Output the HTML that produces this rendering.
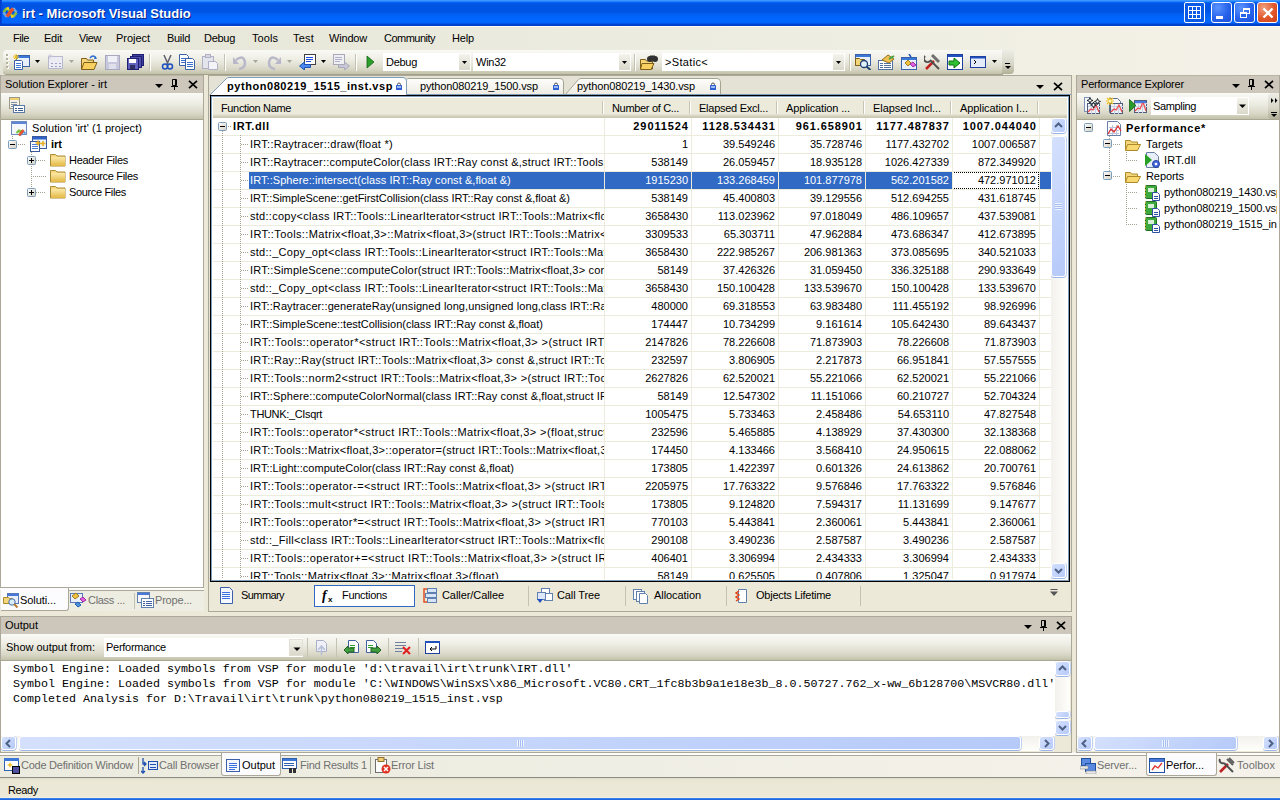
<!DOCTYPE html><html><head><meta charset="utf-8"><style>
*{box-sizing:border-box}
body{font-variant-ligatures:none;margin:0;width:1280px;height:800px;position:relative;overflow:hidden;background:#ECE9D8;font:11px 'Liberation Sans',sans-serif;color:#000}
div{position:absolute}
.t{white-space:nowrap;line-height:13px;height:13px}
.hdr{background:#CCC7BA}
.tb{background:linear-gradient(180deg,#FAFAF6 0%,#EEEDE4 40%,#D8D7C6 80%,#C2C1A9 100%)}
.g{color:#6D6D6D}
</style></head><body>
<div style="left:0px;top:0px;width:1280px;height:26px;background:linear-gradient(180deg,#3D95FF 0px,#3D95FF 1px,#0A6CFF 2px,#0058E8 3px,#0054E3 5px,#0054E3 12px,#0060F0 14px,#0066FF 18px,#0066FF 23px,#0044D0 24px,#0040C8 26px)"></div>
<div class="t" style="left:22px;top:6px;font:bold 13px 'Liberation Sans',sans-serif;color:#fff;height:15px;line-height:15px;text-shadow:1px 1px 0 #0A1E8A">irt - Microsoft Visual Studio</div>
<div style="left:0px;top:0px;width:2px;height:26px;background:linear-gradient(90deg,#0034C8,#0050E0)"></div>
<svg style="position:absolute;left:0px;top:4px" width="20" height="16" viewBox="0 0 20 16"><path d="M3.5 8.5 L6 5 L8 5 L9.5 7" stroke="#7CC040" stroke-width="2.6" fill="none"/><path d="M3.5 8.5 L6 12 L8 12" stroke="#6FA8E0" stroke-width="2.6" fill="none"/><path d="M6.5 4.5 L9 4.5" stroke="#F8D020" stroke-width="2.6"/><path d="M16.5 8.5 L14 5 L12 5" stroke="#6FA8E0" stroke-width="2.6" fill="none"/><path d="M16.5 8.5 L14 12 L12 12 L10.5 10" stroke="#8CC040" stroke-width="2.6" fill="none"/><path d="M11 12.5 L13.5 12.5" stroke="#F8D020" stroke-width="2.6"/><path d="M7 12.5 L13 4.5" stroke="#E8502A" stroke-width="3.6"/></svg>
<div style="left:1184px;top:2px;width:21px;height:21px;border:1px solid #fff;border-radius:2px;background:#0A5AE6"><svg style="position:absolute;left:3px;top:3px" width="13" height="13" viewBox="0 0 13 13"><rect x="0.5" y="0.5" width="12" height="12" fill="none" stroke="#fff"/><path d="M4.5 0v13M8.5 0v13M0 4.5h13M0 8.5h13" stroke="#fff"/></svg></div>
<div style="left:1211px;top:2px;width:21px;height:21px;border:1px solid #fff;border-radius:3px;background:radial-gradient(circle at 30% 25%,#5A94FF,#2663EB 55%,#1B4FD8)"><div style="left:4px;top:13px;width:7px;height:3px;background:#fff"></div></div>
<div style="left:1234px;top:2px;width:21px;height:21px;border:1px solid #fff;border-radius:3px;background:radial-gradient(circle at 30% 25%,#5A94FF,#2663EB 55%,#1B4FD8)"><svg style="position:absolute;left:4px;top:4px" width="12" height="12" viewBox="0 0 12 12"><rect x="4.5" y="1.5" width="6" height="5" fill="none" stroke="#fff"/><rect x="4" y="1" width="7" height="2" fill="#fff"/><rect x="1.5" y="5.5" width="6" height="5" fill="#2663EB" stroke="#fff"/><rect x="1" y="5" width="7" height="2" fill="#fff"/></svg></div>
<div style="left:1257px;top:2px;width:21px;height:21px;border:1px solid #fff;border-radius:3px;background:radial-gradient(circle at 30% 25%,#F0A080,#E2562A 55%,#C8401A)"><svg style="position:absolute;left:4px;top:4px" width="12" height="12" viewBox="0 0 12 12"><path d="M1.5 1.5L10.5 10.5M10.5 1.5L1.5 10.5" stroke="#fff" stroke-width="2.4"/></svg></div>
<div style="left:0px;top:26px;width:1280px;height:49px;background:linear-gradient(90deg,#E5E5D7,#F4F2E8)"></div>
<div style="left:0px;top:26px;width:1280px;height:1px;background:#FFFBEF"></div>
<div class="t" style="left:13px;top:32px;letter-spacing:-0.430px;">File</div>
<div class="t" style="left:44px;top:32px;letter-spacing:-0.242px;">Edit</div>
<div class="t" style="left:79px;top:32px;letter-spacing:-0.410px;">View</div>
<div class="t" style="left:116px;top:32px;letter-spacing:-0.036px;">Project</div>
<div class="t" style="left:167px;top:32px;letter-spacing:-0.294px;">Build</div>
<div class="t" style="left:204px;top:32px;letter-spacing:-0.287px;">Debug</div>
<div class="t" style="left:252px;top:32px;letter-spacing:0.062px;">Tools</div>
<div class="t" style="left:293px;top:32px;letter-spacing:0.203px;">Test</div>
<div class="t" style="left:329px;top:32px;letter-spacing:-0.188px;">Window</div>
<div class="t" style="left:384px;top:32px;letter-spacing:-0.514px;">Community</div>
<div class="t" style="left:452px;top:32px;letter-spacing:-0.156px;">Help</div>
<div style="left:3px;top:50px;width:1000px;height:24px;border-radius:4px 0 0 4px;box-shadow:0 1px 0 #A3A288"></div>
<div class="tb" style="left:3px;top:50px;width:1000px;height:24px;border-radius:4px 0 0 4px"></div>
<div style="left:1002px;top:50px;width:12px;height:24px;border-radius:0 4px 4px 0;background:linear-gradient(180deg,#EEEDE6,#D6D5C6 60%,#B0AF96)"><svg style="position:absolute;left:3px;top:13px" width="6" height="8" viewBox="0 0 6 8"><path d="M0 0.5h5" stroke="#000"/><path d="M0 3h6L3 6z" fill="#000"/></svg></div>
<div style="left:6px;top:54px;width:2px;height:2px;background:#B5B29E;box-shadow:1px 1px 0 #fff"></div>
<div style="left:6px;top:58px;width:2px;height:2px;background:#B5B29E;box-shadow:1px 1px 0 #fff"></div>
<div style="left:6px;top:62px;width:2px;height:2px;background:#B5B29E;box-shadow:1px 1px 0 #fff"></div>
<div style="left:6px;top:66px;width:2px;height:2px;background:#B5B29E;box-shadow:1px 1px 0 #fff"></div>
<svg style="position:absolute;left:13px;top:54px" width="17" height="16" viewBox="0 0 17 16"><rect x="3.5" y="1.5" width="13" height="11" fill="#E8F0FC" stroke="#3A60A8"/><rect x="4" y="2" width="12" height="2" fill="#3C78D8"/><path d="M3 0v6M0 3h6M1 1l4 4M5 1L1 5" stroke="#F0C020"/><path d="M1.5 6.5h7l1 1v8h-8z" fill="#fff" stroke="#3A60A8"/><path d="M3 9.5h5M3 11.5h5M3 13.5h5" stroke="#3C78D8"/></svg>
<svg style="position:absolute;left:35px;top:60px" width="5" height="3" viewBox="0 0 5 3"><path d="M0 0h5L2.5 3z" fill="#000"/></svg>
<svg style="position:absolute;left:47px;top:54px" width="17" height="16" viewBox="0 0 17 16"><rect x="1.5" y="2.5" width="14" height="12" fill="#ECECF4" stroke="#B8B8D0"/><path d="M4 9.5h2M8 9.5h2M12 9.5h2M4 12.5h2M8 12.5h2M12 12.5h2" stroke="#A0A0C0"/><path d="M3 0v5M1 2h5" stroke="#C8C8D8"/></svg>
<svg style="position:absolute;left:69px;top:60px" width="5" height="3" viewBox="0 0 5 3"><path d="M0 0h5L2.5 3z" fill="#A8A898"/></svg>
<svg style="position:absolute;left:81px;top:54px" width="17" height="16" viewBox="0 0 17 16"><path d="M0.5 4.5h5l1 1.5h6v9h-12z" fill="#F3D67A" stroke="#806018"/><path d="M3 8.5h13l-3 7h-12.5z" fill="#F8D060" stroke="#806018"/><path d="M9 4q3-4 6 0" stroke="#2F6FD0" fill="none" stroke-width="1.5"/><path d="M14 2l2 3-3 0z" fill="#2F6FD0"/></svg>
<svg style="position:absolute;left:104px;top:54px" width="17" height="16" viewBox="0 0 17 16"><rect x="1.5" y="1.5" width="14" height="14" fill="#C8C8DC" stroke="#A8A8C0"/><rect x="4" y="2" width="9" height="6" fill="#F0F0F8"/><rect x="5" y="10" width="7" height="5" fill="#E0E0EC"/></svg>
<svg style="position:absolute;left:127px;top:54px" width="17" height="16" viewBox="0 0 17 16"><rect x="5.5" y="0.5" width="11" height="11" fill="#4040A0" stroke="#202070"/><rect x="3.5" y="2.5" width="11" height="11" fill="#5050B0" stroke="#202070"/><rect x="0.5" y="4.5" width="11" height="11" fill="#6060C0" stroke="#202070"/><rect x="2" y="5" width="7" height="4" fill="#fff"/><rect x="3" y="11" width="5" height="4" fill="#303060"/></svg>
<div style="left:149px;top:54px;width:1px;height:17px;background:#C5C2B2;box-shadow:1px 0 0 #fff"></div>
<svg style="position:absolute;left:159px;top:54px" width="17" height="16" viewBox="0 0 17 16"><path d="M5 1L9 10M12 1L8 10" stroke="#606070" stroke-width="1.5"/><circle cx="6" cy="12.5" r="2.5" fill="none" stroke="#2050C0" stroke-width="1.5"/><circle cx="11" cy="12.5" r="2.5" fill="none" stroke="#2050C0" stroke-width="1.5"/></svg>
<svg style="position:absolute;left:179px;top:54px" width="17" height="16" viewBox="0 0 17 16"><path d="M0.5 0.5h7l2 2v9h-9z" fill="#fff" stroke="#3A60A8"/><path d="M2 4.5h5M2 6.5h5M2 8.5h5" stroke="#3A70D0"/><path d="M6.5 4.5h7l2 2v9h-9z" fill="#fff" stroke="#3A60A8"/><path d="M8 8.5h6M8 10.5h6M8 12.5h6" stroke="#3A70D0"/></svg>
<svg style="position:absolute;left:202px;top:54px" width="17" height="16" viewBox="0 0 17 16"><rect x="0.5" y="2.5" width="11" height="12" fill="#E4E4EC" stroke="#B0B0C4"/><rect x="3.5" y="0.5" width="5" height="3" fill="#D8D8E0" stroke="#B0B0C4"/><path d="M6.5 7.5h7l2 2v6h-9z" fill="#F4F4F8" stroke="#B0B0C4"/></svg>
<div style="left:224px;top:54px;width:1px;height:17px;background:#C5C2B2;box-shadow:1px 0 0 #fff"></div>
<svg style="position:absolute;left:232px;top:54px" width="17" height="16" viewBox="0 0 17 16"><path d="M4 6q8-6 9 3q0 5-6 6" stroke="#B8B8C8" fill="none" stroke-width="2.5"/><path d="M1 3v7h6z" fill="#B8B8C8"/></svg>
<svg style="position:absolute;left:253px;top:60px" width="5" height="3" viewBox="0 0 5 3"><path d="M0 0h5L2.5 3z" fill="#A8A898"/></svg>
<svg style="position:absolute;left:265px;top:54px" width="17" height="16" viewBox="0 0 17 16"><path d="M13 6q-8-6-9 3q0 5 6 6" stroke="#B8B8C8" fill="none" stroke-width="2.5"/><path d="M16 3v7h-6z" fill="#B8B8C8"/></svg>
<svg style="position:absolute;left:287px;top:60px" width="5" height="3" viewBox="0 0 5 3"><path d="M0 0h5L2.5 3z" fill="#A8A898"/></svg>
<svg style="position:absolute;left:299px;top:54px" width="17" height="16" viewBox="0 0 17 16"><rect x="5.5" y="0.5" width="11" height="10" fill="#fff" stroke="#404040"/><path d="M7 3.5h7M7 5.5h7M7 7.5h5" stroke="#2050E0"/><path d="M0.5 12l5-4v2.5h6v3h-6V16z" fill="#4A8AF0" stroke="#2050B0"/></svg>
<svg style="position:absolute;left:321px;top:60px" width="5" height="3" viewBox="0 0 5 3"><path d="M0 0h5L2.5 3z" fill="#000"/></svg>
<svg style="position:absolute;left:333px;top:54px" width="17" height="16" viewBox="0 0 17 16"><rect x="0.5" y="0.5" width="11" height="10" fill="#F0F0F4" stroke="#A8A8B8"/><path d="M2 3.5h7M2 5.5h7M2 7.5h5" stroke="#B0B0C8"/><path d="M16.5 12l-5-4v2.5h-6v3h6V16z" fill="#C8C8D8" stroke="#A8A8B8"/></svg>
<div style="left:355px;top:54px;width:1px;height:17px;background:#C5C2B2;box-shadow:1px 0 0 #fff"></div>
<svg style="position:absolute;left:366px;top:55px" width="9" height="14" viewBox="0 0 9 14"><path d="M1 1v12l7-6z" fill="#2AA02A" stroke="#186018" stroke-width="0.8"/></svg>
<div style="left:383px;top:53px;width:88px;height:18px;background:#fff"></div><div class="t" style="left:386px;top:56px;letter-spacing:-0.287px;">Debug</div><div style="left:459px;top:54px;width:11px;height:16px;background:linear-gradient(180deg,#F4F3EC,#DAD8CA)"><svg style="position:absolute;left:3px;top:7px" width="5" height="3" viewBox="0 0 5 3"><path d="M0 0h5L2.5 3z" fill="#000"/></svg></div>
<div style="left:473px;top:53px;width:158px;height:18px;background:#fff"></div><div class="t" style="left:476px;top:56px;letter-spacing:-0.237px;">Win32</div><div style="left:619px;top:54px;width:11px;height:16px;background:linear-gradient(180deg,#F4F3EC,#DAD8CA)"><svg style="position:absolute;left:3px;top:7px" width="5" height="3" viewBox="0 0 5 3"><path d="M0 0h5L2.5 3z" fill="#000"/></svg></div>
<div style="left:634px;top:54px;width:1px;height:17px;background:#C5C2B2;box-shadow:1px 0 0 #fff"></div>
<svg style="position:absolute;left:640px;top:54px" width="18" height="16" viewBox="0 0 18 16"><path d="M0.5 5.5h5l1 1.5h6v8h-12z" fill="#F3D67A" stroke="#806018"/><path d="M2 9.5h12l-3 6h-10.5z" fill="#F8D060" stroke="#806018"/><circle cx="10" cy="5" r="3" fill="#303030"/><circle cx="15" cy="5" r="3" fill="#303030"/><path d="M10 2.5h5" stroke="#303030" stroke-width="2"/></svg>
<div style="left:662px;top:53px;width:183px;height:18px;background:#fff"></div><div class="t" style="left:665px;top:56px;letter-spacing:0.328px;">&gt;Static&lt;</div><div style="left:833px;top:54px;width:11px;height:16px;background:linear-gradient(180deg,#F4F3EC,#DAD8CA)"><svg style="position:absolute;left:3px;top:7px" width="5" height="3" viewBox="0 0 5 3"><path d="M0 0h5L2.5 3z" fill="#000"/></svg></div>
<div style="left:849px;top:54px;width:1px;height:17px;background:#C5C2B2;box-shadow:1px 0 0 #fff"></div>
<svg style="position:absolute;left:855px;top:54px" width="17" height="16" viewBox="0 0 17 16"><rect x="0.5" y="0.5" width="15" height="11" fill="#E8F0FC" stroke="#3A60A8"/><rect x="1" y="1" width="14" height="2" fill="#3C78D8"/><path d="M0.5 4.5h4l1 1h4v6h-9z" fill="#F3D67A" stroke="#806018"/><circle cx="9" cy="10" r="3.5" fill="#E0F0FC" stroke="#204070" stroke-width="1.3"/><path d="M11.5 12.5l4 3.5" stroke="#204070" stroke-width="2"/></svg>
<svg style="position:absolute;left:878px;top:54px" width="17" height="16" viewBox="0 0 17 16"><rect x="0.5" y="6.5" width="14" height="9" fill="#fff" stroke="#5070A0"/><path d="M2 9.5h3M6 9.5h7M2 11.5h3M6 11.5h7M2 13.5h3M6 13.5h7" stroke="#5070A0"/><path d="M4 6l6-5 6 4-5 4z" fill="#F0C050" stroke="#907020"/><path d="M11 5l5-3" stroke="#40A040" stroke-width="2"/></svg>
<svg style="position:absolute;left:901px;top:54px" width="17" height="16" viewBox="0 0 17 16"><rect x="0.5" y="3.5" width="15" height="12" fill="#E8F0FC" stroke="#3A60A8"/><rect x="1" y="4" width="14" height="2" fill="#3C78D8"/><path d="M4 9l3-3 3 3-3 3z" fill="#F0C040" stroke="#A08020"/><path d="M9 10l3-2 3 3-3 2z" fill="#E060E0" stroke="#A030A0"/><path d="M8 0l2 3" stroke="#2050B0" stroke-width="1.5"/></svg>
<svg style="position:absolute;left:924px;top:54px" width="17" height="16" viewBox="0 0 17 16"><path d="M2 15L10 7" stroke="#C02020" stroke-width="2.5"/><path d="M8 1l7 7" stroke="#707070" stroke-width="3"/><path d="M15 15L6 6" stroke="#505050" stroke-width="2"/><path d="M1 2a3.5 3.5 0 0 0 5 5" stroke="#505050" fill="none" stroke-width="2"/></svg>
<svg style="position:absolute;left:947px;top:54px" width="17" height="16" viewBox="0 0 17 16"><rect x="0.5" y="0.5" width="15" height="15" fill="#fff" stroke="#2040A0"/><rect x="1" y="1" width="14" height="2" fill="#2050C0"/><path d="M2 7h5v-3l6 5-6 5v-3h-5z" fill="#30C030" stroke="#107010"/></svg>
<svg style="position:absolute;left:970px;top:54px" width="17" height="16" viewBox="0 0 17 16"><rect x="0.5" y="2.5" width="15" height="11" fill="#E4ECFA" stroke="#2040A0"/><rect x="1" y="3" width="14" height="1.5" fill="#2050C0"/><path d="M4 6l2 2-2 2" stroke="#000" fill="none"/></svg>
<svg style="position:absolute;left:992px;top:60px" width="5" height="3" viewBox="0 0 5 3"><path d="M0 0h5L2.5 3z" fill="#000"/></svg>
<div style="left:0px;top:75px;width:1280px;height:702px;background:#ECE9D8"></div>
<svg width="0" height="0" style="position:absolute"><defs><linearGradient id="pmg" x1="0" y1="0" x2="1" y2="1"><stop offset="0" stop-color="#fff"/><stop offset="1" stop-color="#D2CEC0"/></linearGradient><linearGradient id="fold" x1="0" y1="0" x2="0" y2="1"><stop offset="0" stop-color="#FBE8A8"/><stop offset="1" stop-color="#E5B842"/></linearGradient></defs></svg>
<div style="left:0px;top:75px;width:204px;height:537px;background:#ECE9D8"></div>
<div style="left:0px;top:75px;width:204px;height:513px;background:#ECE9D8;border-right:1px solid #ACA899;border-left:1px solid #ACA899"></div>
<div style="left:1px;top:75px;width:202px;height:1px;background:#B8B5A5"></div>
<div style="left:1px;top:76px;width:202px;height:17px;background:#CCC7BA"></div>
<div class="t" style="left:5px;top:78px;letter-spacing:-0.033px;">Solution Explorer - irt</div>
<svg style="position:absolute;left:155px;top:84px" width="9" height="5" viewBox="0 0 9 5"><path d="M0 0h8L4 4z" fill="#000"/></svg><svg style="position:absolute;left:171px;top:79px" width="8" height="11" viewBox="0 0 8 11"><path d="M1.5 0.5h4v6h-4z" fill="none" stroke="#000"/><path d="M4.5 1v5" stroke="#000"/><path d="M0 7.5h7" stroke="#000"/><path d="M3.5 8v3" stroke="#000"/></svg><svg style="position:absolute;left:188px;top:80px" width="10" height="9" viewBox="0 0 10 9"><path d="M1 0.8L9 8.2M9 0.8L1 8.2" stroke="#000" stroke-width="1.7"/></svg>
<div class="tb" style="left:1px;top:93px;width:202px;height:26px;"></div>
<div style="left:1px;top:119px;width:202px;height:1px;background:#A9A693"></div>
<div style="left:1px;top:120px;width:202px;height:467px;background:#fff"></div>
<div style="left:12px;top:136px;width:1px;height:8px;background:repeating-linear-gradient(180deg,#A5A294 0 1px,transparent 1px 2px)"></div>
<div style="left:18px;top:144px;width:8px;height:1px;background:repeating-linear-gradient(90deg,#A5A294 0 1px,transparent 1px 2px)"></div>
<div style="left:31px;top:152px;width:1px;height:40px;background:repeating-linear-gradient(180deg,#A5A294 0 1px,transparent 1px 2px)"></div>
<div style="left:36px;top:160px;width:10px;height:1px;background:repeating-linear-gradient(90deg,#A5A294 0 1px,transparent 1px 2px)"></div>
<div style="left:31px;top:176px;width:15px;height:1px;background:repeating-linear-gradient(90deg,#A5A294 0 1px,transparent 1px 2px)"></div>
<div style="left:36px;top:192px;width:10px;height:1px;background:repeating-linear-gradient(90deg,#A5A294 0 1px,transparent 1px 2px)"></div>
<svg style="position:absolute;left:8px;top:140px" width="9" height="9" viewBox="0 0 9 9"><rect x="0.5" y="0.5" width="8" height="8" rx="1" fill="url(#pmg)" stroke="#7B9EBD"/><path d="M2 4.5h5" stroke="#000"/></svg>
<svg style="position:absolute;left:27px;top:156px" width="9" height="9" viewBox="0 0 9 9"><rect x="0.5" y="0.5" width="8" height="8" rx="1" fill="url(#pmg)" stroke="#7B9EBD"/><path d="M2 4.5h5" stroke="#000"/><path d="M4.5 2v5" stroke="#000"/></svg>
<svg style="position:absolute;left:27px;top:188px" width="9" height="9" viewBox="0 0 9 9"><rect x="0.5" y="0.5" width="8" height="8" rx="1" fill="url(#pmg)" stroke="#7B9EBD"/><path d="M2 4.5h5" stroke="#000"/><path d="M4.5 2v5" stroke="#000"/></svg>
<svg style="position:absolute;left:11px;top:121px" width="17" height="16" viewBox="0 0 17 16"><rect x="0.5" y="0.5" width="15" height="13" fill="#F4F7FC" stroke="#6F8BB8"/><rect x="1" y="1" width="14" height="2" fill="#5B86D9"/><path d="M5.5 12 L8 9.5 L9.5 11 L12 9.5" stroke="#7CC040" stroke-width="2.2" fill="none"/><path d="M9 14.5 L12 10.5 L14.5 12.5" stroke="#5A9AE0" stroke-width="2.2" fill="none"/><path d="M8 14.5 L12.5 9" stroke="#E8502A" stroke-width="2.6"/></svg>
<div class="t" style="left:32px;top:122px;letter-spacing:0.047px;">Solution 'irt' (1 project)</div>
<svg style="position:absolute;left:30px;top:136px" width="17" height="16" viewBox="0 0 17 16"><rect x="2.5" y="0.5" width="14" height="12" fill="#EEF3FC" stroke="#3A5A9A"/><rect x="3" y="1" width="13" height="2.5" fill="#2F62C8"/><rect x="0.5" y="5.5" width="9" height="10" fill="#fff" stroke="#3A5A9A"/><path d="M2 8.5h6M2 10.5h6M2 12.5h6" stroke="#4C7ED8"/><path d="M8 4.5v5M5.5 7h5M13 5v5M10.5 7.5h5" stroke="#E8B020" stroke-width="1.6"/></svg>
<div class="t" style="left:51px;top:138px;font-weight:bold">irt</div>
<svg style="position:absolute;left:50px;top:152px" width="16" height="15" viewBox="0 0 16 15"><path d="M0.5 2.5h5l1.5 1.5h8v10h-14.5z" fill="#F5D97E" stroke="#A88A3A"/><rect x="1" y="5" width="14" height="9" fill="url(#fold)"/></svg>
<div class="t" style="left:69px;top:154px;letter-spacing:-0.281px;">Header Files</div>
<svg style="position:absolute;left:50px;top:168px" width="16" height="15" viewBox="0 0 16 15"><path d="M0.5 2.5h5l1.5 1.5h8v10h-14.5z" fill="#F5D97E" stroke="#A88A3A"/><rect x="1" y="5" width="14" height="9" fill="url(#fold)"/></svg>
<div class="t" style="left:69px;top:170px;letter-spacing:-0.312px;">Resource Files</div>
<svg style="position:absolute;left:50px;top:184px" width="16" height="15" viewBox="0 0 16 15"><path d="M0.5 2.5h5l1.5 1.5h8v10h-14.5z" fill="#F5D97E" stroke="#A88A3A"/><rect x="1" y="5" width="14" height="9" fill="url(#fold)"/></svg>
<div class="t" style="left:69px;top:186px;letter-spacing:-0.346px;">Source Files</div>
<svg style="position:absolute;left:8px;top:96px" width="18" height="18" viewBox="0 0 18 18"><rect x="1.5" y="1.5" width="10" height="11" fill="#F4F2E8" stroke="#9A9A8A"/><rect x="2" y="2" width="9" height="2" fill="#F0D070"/><path d="M3 6.5h6M3 8.5h6M3 10.5h6" stroke="#8090A0"/><rect x="5.5" y="9.5" width="11" height="7" fill="#fff" stroke="#5A78A8"/><path d="M7 12.5h2M10 12.5h5M7 14.5h2M10 14.5h5" stroke="#3A5A90"/></svg>
<div style="left:1px;top:587px;width:203px;height:1px;background:#ACA899"></div>
<div style="left:0px;top:588px;width:204px;height:23px;background:linear-gradient(90deg,#ECEBDF,#EFEEE4)"></div>
<div style="left:0px;top:588px;width:204px;height:2px;background:#FDFDFB"></div>
<div style="left:68px;top:590px;width:136px;height:1px;background:#ACA899"></div>
<div style="left:1px;top:588px;width:68px;height:23px;background:#FCFCFE;border-right:1px solid #ACA899;border-bottom:1px solid #ACA899;border-radius:0 0 3px 0"></div>
<svg style="position:absolute;left:3px;top:592px" width="17" height="16" viewBox="0 0 17 16"><rect x="4.5" y="1.5" width="11" height="10" fill="#E9EEF8" stroke="#5878B8"/><rect x="5" y="2" width="10" height="2" fill="#4A78D8"/><path d="M0.5 5.5h5l1 1h3v5h-9z" fill="#F3D67A" stroke="#B08A2A"/><circle cx="9" cy="10" r="3.2" fill="#D8ECFA" stroke="#4870A8"/><path d="M11 12l3.5 3.5" stroke="#B87A30" stroke-width="2"/></svg>
<div class="t" style="left:20px;top:594px;letter-spacing:-0.080px;">Soluti...</div>
<svg style="position:absolute;left:70px;top:592px" width="17" height="16" viewBox="0 0 17 16"><rect x="0.5" y="1.5" width="12" height="9" fill="#E9EEF8" stroke="#5878B8"/><path d="M2 4l4-3 3 3-4 3z" fill="#F0C040" stroke="#A08020"/><path d="M10 7l3-2 3 3-3 2z" fill="#E060E0" stroke="#A030A0"/><path d="M5 12l3-2 3 3-3 2z" fill="#5090E0" stroke="#2060B0"/></svg>
<div class="t" style="left:88px;top:594px;letter-spacing:-0.306px;color:#707070">Class ...</div>
<div style="left:134px;top:593px;width:1px;height:16px;background:#C5C2B2"></div>
<svg style="position:absolute;left:137px;top:592px" width="17" height="16" viewBox="0 0 17 16"><rect x="0.5" y="0.5" width="12" height="10" fill="#F4F6FC" stroke="#6080B0"/><rect x="1" y="1" width="11" height="2" fill="#4A78D8"/><rect x="4.5" y="6.5" width="12" height="9" fill="#fff" stroke="#6080B0"/><path d="M6 9.5h2M9 9.5h6M6 11.5h2M9 11.5h6M6 13.5h2M9 13.5h6" stroke="#4060A0"/></svg>
<div class="t" style="left:155px;top:594px;letter-spacing:-0.195px;color:#707070">Prope...</div>
<div style="left:208px;top:75px;width:864px;height:537px;background:#E4E2D4;border:1px solid #ACA899;border-bottom:none"></div>
<svg style="position:absolute;left:392px;top:77px" width="172" height="19" viewBox="0 0 172 19"><defs><linearGradient id="tg392" x1="0" y1="0" x2="0" y2="1"><stop offset="0" stop-color="#FEFEFE"/><stop offset="1" stop-color="#ECEAE0"/></linearGradient></defs><path d="M0.5 18.5 L14.5 2.5 Q15.5 1.5 17 1.5 L168 1.5 Q171.5 1.5 171.5 5 L171.5 18.5" fill="url(#tg392)" stroke="#A5A491"/></svg><div class="t" style="left:420px;top:80px;letter-spacing:-0.125px;">python080219_1500.vsp</div><svg style="position:absolute;left:553px;top:82px" width="7" height="9" viewBox="0 0 7 9"><path d="M1.5 3.5V2.5a1.5 1.5 0 0 1 3 0v1" stroke="#555" fill="none"/><rect x="0" y="3" width="6" height="5" rx="0.5" fill="#2F5FD0"/><rect x="1" y="4" width="4" height="2" fill="#9DBAF2"/></svg>
<svg style="position:absolute;left:564px;top:77px" width="157" height="19" viewBox="0 0 157 19"><defs><linearGradient id="tg564" x1="0" y1="0" x2="0" y2="1"><stop offset="0" stop-color="#FEFEFE"/><stop offset="1" stop-color="#ECEAE0"/></linearGradient></defs><path d="M0.5 18.5 L14.5 2.5 Q15.5 1.5 17 1.5 L153 1.5 Q156.5 1.5 156.5 5 L156.5 18.5" fill="url(#tg564)" stroke="#A5A491"/></svg><div class="t" style="left:577px;top:80px;letter-spacing:-0.125px;">python080219_1430.vsp</div><svg style="position:absolute;left:710px;top:82px" width="7" height="9" viewBox="0 0 7 9"><path d="M1.5 3.5V2.5a1.5 1.5 0 0 1 3 0v1" stroke="#555" fill="none"/><rect x="0" y="3" width="6" height="5" rx="0.5" fill="#2F5FD0"/><rect x="1" y="4" width="4" height="2" fill="#9DBAF2"/></svg>
<div style="left:407px;top:94px;width:664px;height:1px;background:#7F9DB9"></div>
<svg style="position:absolute;left:209px;top:76px" width="198" height="20" viewBox="0 0 198 20"><path d="M0.5 19.5 L17.5 2.5 Q18.5 1.5 20 1.5 L194 1.5 Q197.5 1.5 197.5 5 L197.5 19.5" fill="#fff" stroke="#7F9DB9"/></svg>
<div class="t" style="left:227px;top:80px;font-weight:bold;letter-spacing:0.55px">python080219_1515_inst.vsp</div>
<svg style="position:absolute;left:396px;top:82px" width="7" height="9" viewBox="0 0 7 9"><path d="M1.5 3.5V2.5a1.5 1.5 0 0 1 3 0v1" stroke="#555" fill="none"/><rect x="0" y="3" width="6" height="5" rx="0.5" fill="#2F5FD0"/><rect x="1" y="4" width="4" height="2" fill="#9DBAF2"/></svg>
<svg style="position:absolute;left:1036px;top:85px" width="9" height="5" viewBox="0 0 9 5"><path d="M0 0h8L4 4z" fill="#000"/></svg>
<svg style="position:absolute;left:1053px;top:82px" width="10" height="9" viewBox="0 0 10 9"><path d="M1 0.8L9 8.2M9 0.8L1 8.2" stroke="#000" stroke-width="1.7"/></svg>
<div style="left:210px;top:95px;width:860px;height:487px;border:1px solid #000;background:#fff"></div>
<div style="left:211px;top:96px;width:858px;height:485px;border:1px solid #7F9DB9"></div>
<div style="left:213px;top:98px;width:854px;height:20px;background:linear-gradient(180deg,#EBEADB 0,#EBEADB 16px,#E0DECE 17px,#D3D0BC 18px,#C8C5B0 20px)"></div>
<div class="t" style="left:221px;top:102px;letter-spacing:-0.356px;">Function Name</div>
<div class="t" style="left:612px;top:102px;letter-spacing:-0.326px;">Number of C...</div>
<div class="t" style="left:699px;top:102px;letter-spacing:-0.254px;">Elapsed Excl...</div>
<div class="t" style="left:786px;top:102px;letter-spacing:-0.140px;">Application ...</div>
<div class="t" style="left:873px;top:102px;letter-spacing:-0.077px;">Elapsed Incl...</div>
<div class="t" style="left:960px;top:102px;letter-spacing:-0.072px;">Application I...</div>
<div style="left:602px;top:101px;width:1px;height:13px;background:#C7C5B2;box-shadow:1px 0 0 #fff"></div>
<div style="left:689px;top:101px;width:1px;height:13px;background:#C7C5B2;box-shadow:1px 0 0 #fff"></div>
<div style="left:776px;top:101px;width:1px;height:13px;background:#C7C5B2;box-shadow:1px 0 0 #fff"></div>
<div style="left:863px;top:101px;width:1px;height:13px;background:#C7C5B2;box-shadow:1px 0 0 #fff"></div>
<div style="left:950px;top:101px;width:1px;height:13px;background:#C7C5B2;box-shadow:1px 0 0 #fff"></div>
<div style="left:1037px;top:101px;width:1px;height:13px;background:#C7C5B2;box-shadow:1px 0 0 #fff"></div>
<div style="left:213px;top:118px;width:838px;height:461px;overflow:hidden;background:#fff"><div style="left:0px;top:17px;width:838px;height:1px;background:#EDEBDC"></div><div class="t" style="left:20px;top:2px;font-weight:bold;letter-spacing:0.6px">IRT.dll</div><div class="t" style="right:363px;top:2px;text-align:right;font-weight:bold;letter-spacing:0.9px;margin-right:-0.9px">29011524</div><div class="t" style="right:276px;top:2px;text-align:right;font-weight:bold;letter-spacing:0.9px;margin-right:-0.9px">1128.534431</div><div class="t" style="right:189px;top:2px;text-align:right;font-weight:bold;letter-spacing:0.9px;margin-right:-0.9px">961.658901</div><div class="t" style="right:102px;top:2px;text-align:right;font-weight:bold;letter-spacing:0.9px;margin-right:-0.9px">1177.487837</div><div class="t" style="right:15px;top:2px;text-align:right;font-weight:bold;letter-spacing:0.9px;margin-right:-0.9px">1007.044040</div><div style="left:0px;top:35px;width:838px;height:1px;background:#EDEBDC"></div><div style="left:37px;top:18px;width:354px;height:17px;overflow:hidden"><div class="t" style="left:0px;top:2px;letter-spacing:0.257px;">IRT::Raytracer::draw(float *)</div></div><div class="t" style="right:363px;top:20px;text-align:right;">1</div><div class="t" style="right:276px;top:20px;text-align:right;">39.549246</div><div class="t" style="right:189px;top:20px;text-align:right;">35.728746</div><div class="t" style="right:102px;top:20px;text-align:right;">1177.432702</div><div class="t" style="right:15px;top:20px;text-align:right;">1007.006587</div><div style="left:0px;top:53px;width:838px;height:1px;background:#EDEBDC"></div><div style="left:37px;top:36px;width:354px;height:17px;overflow:hidden"><div class="t" style="left:0px;top:2px;letter-spacing:0.207px;">IRT::Raytracer::computeColor(class IRT::Ray const &amp;,struct IRT::Tools:</div></div><div class="t" style="right:363px;top:38px;text-align:right;">538149</div><div class="t" style="right:276px;top:38px;text-align:right;">26.059457</div><div class="t" style="right:189px;top:38px;text-align:right;">18.935128</div><div class="t" style="right:102px;top:38px;text-align:right;">1026.427339</div><div class="t" style="right:15px;top:38px;text-align:right;">872.349920</div><div style="left:0px;top:71px;width:838px;height:1px;background:#EDEBDC"></div><div style="left:36px;top:54px;width:802px;height:17px;background:#316AC5"></div><div style="left:739px;top:54px;width:87px;height:17px;background:#fff;border:1px dotted #000"></div><div style="left:37px;top:54px;width:354px;height:17px;overflow:hidden"><div class="t" style="left:0px;top:2px;letter-spacing:0.072px;color:#fff">IRT::Sphere::intersect(class IRT::Ray const &amp;,float &amp;)</div></div><div class="t" style="right:363px;top:56px;text-align:right;color:#fff">1915230</div><div class="t" style="right:276px;top:56px;text-align:right;color:#fff">133.268459</div><div class="t" style="right:189px;top:56px;text-align:right;color:#fff">101.877978</div><div class="t" style="right:102px;top:56px;text-align:right;color:#fff">562.201582</div><div class="t" style="right:15px;top:56px;text-align:right;">472.971012</div><div style="left:0px;top:89px;width:838px;height:1px;background:#EDEBDC"></div><div style="left:37px;top:72px;width:354px;height:17px;overflow:hidden"><div class="t" style="left:0px;top:2px;letter-spacing:-0.047px;">IRT::SimpleScene::getFirstCollision(class IRT::Ray const &amp;,float &amp;)</div></div><div class="t" style="right:363px;top:74px;text-align:right;">538149</div><div class="t" style="right:276px;top:74px;text-align:right;">45.400803</div><div class="t" style="right:189px;top:74px;text-align:right;">39.129556</div><div class="t" style="right:102px;top:74px;text-align:right;">512.694255</div><div class="t" style="right:15px;top:74px;text-align:right;">431.618745</div><div style="left:0px;top:107px;width:838px;height:1px;background:#EDEBDC"></div><div style="left:37px;top:90px;width:354px;height:17px;overflow:hidden"><div class="t" style="left:0px;top:2px;letter-spacing:0.279px;">std::copy&lt;class IRT::Tools::LinearIterator&lt;struct IRT::Tools::Matrix&lt;flo</div></div><div class="t" style="right:363px;top:92px;text-align:right;">3658430</div><div class="t" style="right:276px;top:92px;text-align:right;">113.023962</div><div class="t" style="right:189px;top:92px;text-align:right;">97.018049</div><div class="t" style="right:102px;top:92px;text-align:right;">486.109657</div><div class="t" style="right:15px;top:92px;text-align:right;">437.539081</div><div style="left:0px;top:125px;width:838px;height:1px;background:#EDEBDC"></div><div style="left:37px;top:108px;width:354px;height:17px;overflow:hidden"><div class="t" style="left:0px;top:2px;letter-spacing:0.378px;">IRT::Tools::Matrix&lt;float,3&gt;::Matrix&lt;float,3&gt;(struct IRT::Tools::Matrix&lt;</div></div><div class="t" style="right:363px;top:110px;text-align:right;">3309533</div><div class="t" style="right:276px;top:110px;text-align:right;">65.303711</div><div class="t" style="right:189px;top:110px;text-align:right;">47.962884</div><div class="t" style="right:102px;top:110px;text-align:right;">473.686347</div><div class="t" style="right:15px;top:110px;text-align:right;">412.673895</div><div style="left:0px;top:143px;width:838px;height:1px;background:#EDEBDC"></div><div style="left:37px;top:126px;width:354px;height:17px;overflow:hidden"><div class="t" style="left:0px;top:2px;letter-spacing:0.282px;">std::_Copy_opt&lt;class IRT::Tools::LinearIterator&lt;struct IRT::Tools::Mat</div></div><div class="t" style="right:363px;top:128px;text-align:right;">3658430</div><div class="t" style="right:276px;top:128px;text-align:right;">222.985267</div><div class="t" style="right:189px;top:128px;text-align:right;">206.981363</div><div class="t" style="right:102px;top:128px;text-align:right;">373.085695</div><div class="t" style="right:15px;top:128px;text-align:right;">340.521033</div><div style="left:0px;top:161px;width:838px;height:1px;background:#EDEBDC"></div><div style="left:37px;top:144px;width:354px;height:17px;overflow:hidden"><div class="t" style="left:0px;top:2px;letter-spacing:0.198px;">IRT::SimpleScene::computeColor(struct IRT::Tools::Matrix&lt;float,3&gt; con</div></div><div class="t" style="right:363px;top:146px;text-align:right;">58149</div><div class="t" style="right:276px;top:146px;text-align:right;">37.426326</div><div class="t" style="right:189px;top:146px;text-align:right;">31.059450</div><div class="t" style="right:102px;top:146px;text-align:right;">336.325188</div><div class="t" style="right:15px;top:146px;text-align:right;">290.933649</div><div style="left:0px;top:179px;width:838px;height:1px;background:#EDEBDC"></div><div style="left:37px;top:162px;width:354px;height:17px;overflow:hidden"><div class="t" style="left:0px;top:2px;letter-spacing:0.282px;">std::_Copy_opt&lt;class IRT::Tools::LinearIterator&lt;struct IRT::Tools::Mat</div></div><div class="t" style="right:363px;top:164px;text-align:right;">3658430</div><div class="t" style="right:276px;top:164px;text-align:right;">150.100428</div><div class="t" style="right:189px;top:164px;text-align:right;">133.539670</div><div class="t" style="right:102px;top:164px;text-align:right;">150.100428</div><div class="t" style="right:15px;top:164px;text-align:right;">133.539670</div><div style="left:0px;top:197px;width:838px;height:1px;background:#EDEBDC"></div><div style="left:37px;top:180px;width:354px;height:17px;overflow:hidden"><div class="t" style="left:0px;top:2px;letter-spacing:0.090px;">IRT::Raytracer::generateRay(unsigned long,unsigned long,class IRT::Ra</div></div><div class="t" style="right:363px;top:182px;text-align:right;">480000</div><div class="t" style="right:276px;top:182px;text-align:right;">69.318553</div><div class="t" style="right:189px;top:182px;text-align:right;">63.983480</div><div class="t" style="right:102px;top:182px;text-align:right;">111.455192</div><div class="t" style="right:15px;top:182px;text-align:right;">98.926996</div><div style="left:0px;top:215px;width:838px;height:1px;background:#EDEBDC"></div><div style="left:37px;top:198px;width:354px;height:17px;overflow:hidden"><div class="t" style="left:0px;top:2px;letter-spacing:-0.013px;">IRT::SimpleScene::testCollision(class IRT::Ray const &amp;,float)</div></div><div class="t" style="right:363px;top:200px;text-align:right;">174447</div><div class="t" style="right:276px;top:200px;text-align:right;">10.734299</div><div class="t" style="right:189px;top:200px;text-align:right;">9.161614</div><div class="t" style="right:102px;top:200px;text-align:right;">105.642430</div><div class="t" style="right:15px;top:200px;text-align:right;">89.643437</div><div style="left:0px;top:233px;width:838px;height:1px;background:#EDEBDC"></div><div style="left:37px;top:216px;width:354px;height:17px;overflow:hidden"><div class="t" style="left:0px;top:2px;letter-spacing:0.452px;">IRT::Tools::operator*&lt;struct IRT::Tools::Matrix&lt;float,3&gt; &gt;(struct IRT:</div></div><div class="t" style="right:363px;top:218px;text-align:right;">2147826</div><div class="t" style="right:276px;top:218px;text-align:right;">78.226608</div><div class="t" style="right:189px;top:218px;text-align:right;">71.873903</div><div class="t" style="right:102px;top:218px;text-align:right;">78.226608</div><div class="t" style="right:15px;top:218px;text-align:right;">71.873903</div><div style="left:0px;top:251px;width:838px;height:1px;background:#EDEBDC"></div><div style="left:37px;top:234px;width:354px;height:17px;overflow:hidden"><div class="t" style="left:0px;top:2px;letter-spacing:0.307px;">IRT::Ray::Ray(struct IRT::Tools::Matrix&lt;float,3&gt; const &amp;,struct IRT::To</div></div><div class="t" style="right:363px;top:236px;text-align:right;">232597</div><div class="t" style="right:276px;top:236px;text-align:right;">3.806905</div><div class="t" style="right:189px;top:236px;text-align:right;">2.217873</div><div class="t" style="right:102px;top:236px;text-align:right;">66.951841</div><div class="t" style="right:15px;top:236px;text-align:right;">57.557555</div><div style="left:0px;top:269px;width:838px;height:1px;background:#EDEBDC"></div><div style="left:37px;top:252px;width:354px;height:17px;overflow:hidden"><div class="t" style="left:0px;top:2px;letter-spacing:0.356px;">IRT::Tools::norm2&lt;struct IRT::Tools::Matrix&lt;float,3&gt; &gt;(struct IRT::Too</div></div><div class="t" style="right:363px;top:254px;text-align:right;">2627826</div><div class="t" style="right:276px;top:254px;text-align:right;">62.520021</div><div class="t" style="right:189px;top:254px;text-align:right;">55.221066</div><div class="t" style="right:102px;top:254px;text-align:right;">62.520021</div><div class="t" style="right:15px;top:254px;text-align:right;">55.221066</div><div style="left:0px;top:287px;width:838px;height:1px;background:#EDEBDC"></div><div style="left:37px;top:270px;width:354px;height:17px;overflow:hidden"><div class="t" style="left:0px;top:2px;letter-spacing:0.125px;">IRT::Sphere::computeColorNormal(class IRT::Ray const &amp;,float,struct IF</div></div><div class="t" style="right:363px;top:272px;text-align:right;">58149</div><div class="t" style="right:276px;top:272px;text-align:right;">12.547302</div><div class="t" style="right:189px;top:272px;text-align:right;">11.151066</div><div class="t" style="right:102px;top:272px;text-align:right;">60.210727</div><div class="t" style="right:15px;top:272px;text-align:right;">52.704324</div><div style="left:0px;top:305px;width:838px;height:1px;background:#EDEBDC"></div><div style="left:37px;top:288px;width:354px;height:17px;overflow:hidden"><div class="t" style="left:0px;top:2px;letter-spacing:-0.339px;">THUNK:_CIsqrt</div></div><div class="t" style="right:363px;top:290px;text-align:right;">1005475</div><div class="t" style="right:276px;top:290px;text-align:right;">5.733463</div><div class="t" style="right:189px;top:290px;text-align:right;">2.458486</div><div class="t" style="right:102px;top:290px;text-align:right;">54.653110</div><div class="t" style="right:15px;top:290px;text-align:right;">47.827548</div><div style="left:0px;top:323px;width:838px;height:1px;background:#EDEBDC"></div><div style="left:37px;top:306px;width:354px;height:17px;overflow:hidden"><div class="t" style="left:0px;top:2px;letter-spacing:0.425px;">IRT::Tools::operator*&lt;struct IRT::Tools::Matrix&lt;float,3&gt; &gt;(float,struct</div></div><div class="t" style="right:363px;top:308px;text-align:right;">232596</div><div class="t" style="right:276px;top:308px;text-align:right;">5.465885</div><div class="t" style="right:189px;top:308px;text-align:right;">4.138929</div><div class="t" style="right:102px;top:308px;text-align:right;">37.430300</div><div class="t" style="right:15px;top:308px;text-align:right;">32.138368</div><div style="left:0px;top:341px;width:838px;height:1px;background:#EDEBDC"></div><div style="left:37px;top:324px;width:354px;height:17px;overflow:hidden"><div class="t" style="left:0px;top:2px;letter-spacing:0.309px;">IRT::Tools::Matrix&lt;float,3&gt;::operator=(struct IRT::Tools::Matrix&lt;float,3</div></div><div class="t" style="right:363px;top:326px;text-align:right;">174450</div><div class="t" style="right:276px;top:326px;text-align:right;">4.133466</div><div class="t" style="right:189px;top:326px;text-align:right;">3.568410</div><div class="t" style="right:102px;top:326px;text-align:right;">24.950615</div><div class="t" style="right:15px;top:326px;text-align:right;">22.088062</div><div style="left:0px;top:359px;width:838px;height:1px;background:#EDEBDC"></div><div style="left:37px;top:342px;width:354px;height:17px;overflow:hidden"><div class="t" style="left:0px;top:2px;letter-spacing:0.037px;">IRT::Light::computeColor(class IRT::Ray const &amp;,float)</div></div><div class="t" style="right:363px;top:344px;text-align:right;">173805</div><div class="t" style="right:276px;top:344px;text-align:right;">1.422397</div><div class="t" style="right:189px;top:344px;text-align:right;">0.601326</div><div class="t" style="right:102px;top:344px;text-align:right;">24.613862</div><div class="t" style="right:15px;top:344px;text-align:right;">20.700761</div><div style="left:0px;top:377px;width:838px;height:1px;background:#EDEBDC"></div><div style="left:37px;top:360px;width:354px;height:17px;overflow:hidden"><div class="t" style="left:0px;top:2px;letter-spacing:0.395px;">IRT::Tools::operator-=&lt;struct IRT::Tools::Matrix&lt;float,3&gt; &gt;(struct IRT</div></div><div class="t" style="right:363px;top:362px;text-align:right;">2205975</div><div class="t" style="right:276px;top:362px;text-align:right;">17.763322</div><div class="t" style="right:189px;top:362px;text-align:right;">9.576846</div><div class="t" style="right:102px;top:362px;text-align:right;">17.763322</div><div class="t" style="right:15px;top:362px;text-align:right;">9.576846</div><div style="left:0px;top:395px;width:838px;height:1px;background:#EDEBDC"></div><div style="left:37px;top:378px;width:354px;height:17px;overflow:hidden"><div class="t" style="left:0px;top:2px;letter-spacing:0.385px;">IRT::Tools::mult&lt;struct IRT::Tools::Matrix&lt;float,3&gt; &gt;(struct IRT::Tools</div></div><div class="t" style="right:363px;top:380px;text-align:right;">173805</div><div class="t" style="right:276px;top:380px;text-align:right;">9.124820</div><div class="t" style="right:189px;top:380px;text-align:right;">7.594317</div><div class="t" style="right:102px;top:380px;text-align:right;">11.131699</div><div class="t" style="right:15px;top:380px;text-align:right;">9.147677</div><div style="left:0px;top:413px;width:838px;height:1px;background:#EDEBDC"></div><div style="left:37px;top:396px;width:354px;height:17px;overflow:hidden"><div class="t" style="left:0px;top:2px;letter-spacing:0.386px;">IRT::Tools::operator*=&lt;struct IRT::Tools::Matrix&lt;float,3&gt; &gt;(struct IRT</div></div><div class="t" style="right:363px;top:398px;text-align:right;">770103</div><div class="t" style="right:276px;top:398px;text-align:right;">5.443841</div><div class="t" style="right:189px;top:398px;text-align:right;">2.360061</div><div class="t" style="right:102px;top:398px;text-align:right;">5.443841</div><div class="t" style="right:15px;top:398px;text-align:right;">2.360061</div><div style="left:0px;top:431px;width:838px;height:1px;background:#EDEBDC"></div><div style="left:37px;top:414px;width:354px;height:17px;overflow:hidden"><div class="t" style="left:0px;top:2px;letter-spacing:0.317px;">std::_Fill&lt;class IRT::Tools::LinearIterator&lt;struct IRT::Tools::Matrix&lt;flo</div></div><div class="t" style="right:363px;top:416px;text-align:right;">290108</div><div class="t" style="right:276px;top:416px;text-align:right;">3.490236</div><div class="t" style="right:189px;top:416px;text-align:right;">2.587587</div><div class="t" style="right:102px;top:416px;text-align:right;">3.490236</div><div class="t" style="right:15px;top:416px;text-align:right;">2.587587</div><div style="left:0px;top:449px;width:838px;height:1px;background:#EDEBDC"></div><div style="left:37px;top:432px;width:354px;height:17px;overflow:hidden"><div class="t" style="left:0px;top:2px;letter-spacing:0.455px;">IRT::Tools::operator+=&lt;struct IRT::Tools::Matrix&lt;float,3&gt; &gt;(struct IR</div></div><div class="t" style="right:363px;top:434px;text-align:right;">406401</div><div class="t" style="right:276px;top:434px;text-align:right;">3.306994</div><div class="t" style="right:189px;top:434px;text-align:right;">2.434333</div><div class="t" style="right:102px;top:434px;text-align:right;">3.306994</div><div class="t" style="right:15px;top:434px;text-align:right;">2.434333</div><div style="left:0px;top:467px;width:838px;height:1px;background:#EDEBDC"></div><div style="left:37px;top:450px;width:354px;height:17px;overflow:hidden"><div class="t" style="left:0px;top:2px;letter-spacing:0.293px;">IRT::Tools::Matrix&lt;float,3&gt;::Matrix&lt;float,3&gt;(float)</div></div><div class="t" style="right:363px;top:452px;text-align:right;">58149</div><div class="t" style="right:276px;top:452px;text-align:right;">0.625505</div><div class="t" style="right:189px;top:452px;text-align:right;">0.407806</div><div class="t" style="right:102px;top:452px;text-align:right;">1.325047</div><div class="t" style="right:15px;top:452px;text-align:right;">0.917974</div><div style="left:391px;top:0px;width:1px;height:463px;background:#EDEBDC"></div><div style="left:478px;top:0px;width:1px;height:463px;background:#EDEBDC"></div><div style="left:565px;top:0px;width:1px;height:463px;background:#EDEBDC"></div><div style="left:652px;top:0px;width:1px;height:463px;background:#EDEBDC"></div><div style="left:739px;top:0px;width:1px;height:463px;background:#EDEBDC"></div><div style="left:826px;top:0px;width:1px;height:463px;background:#EDEBDC"></div><div style="left:9px;top:13px;width:1px;height:450px;background:repeating-linear-gradient(180deg,#A5A294 0 1px,transparent 1px 2px)"></div><div style="left:27px;top:17px;width:1px;height:446px;background:repeating-linear-gradient(180deg,#A5A294 0 1px,transparent 1px 2px)"></div><div style="left:15px;top:8px;width:4px;height:1px;background:repeating-linear-gradient(90deg,#A5A294 0 1px,transparent 1px 2px)"></div><div style="left:28px;top:26px;width:8px;height:1px;background:repeating-linear-gradient(90deg,#A5A294 0 1px,transparent 1px 2px)"></div><div style="left:28px;top:44px;width:8px;height:1px;background:repeating-linear-gradient(90deg,#A5A294 0 1px,transparent 1px 2px)"></div><div style="left:28px;top:62px;width:8px;height:1px;background:repeating-linear-gradient(90deg,#A5A294 0 1px,transparent 1px 2px)"></div><div style="left:28px;top:80px;width:8px;height:1px;background:repeating-linear-gradient(90deg,#A5A294 0 1px,transparent 1px 2px)"></div><div style="left:28px;top:98px;width:8px;height:1px;background:repeating-linear-gradient(90deg,#A5A294 0 1px,transparent 1px 2px)"></div><div style="left:28px;top:116px;width:8px;height:1px;background:repeating-linear-gradient(90deg,#A5A294 0 1px,transparent 1px 2px)"></div><div style="left:28px;top:134px;width:8px;height:1px;background:repeating-linear-gradient(90deg,#A5A294 0 1px,transparent 1px 2px)"></div><div style="left:28px;top:152px;width:8px;height:1px;background:repeating-linear-gradient(90deg,#A5A294 0 1px,transparent 1px 2px)"></div><div style="left:28px;top:170px;width:8px;height:1px;background:repeating-linear-gradient(90deg,#A5A294 0 1px,transparent 1px 2px)"></div><div style="left:28px;top:188px;width:8px;height:1px;background:repeating-linear-gradient(90deg,#A5A294 0 1px,transparent 1px 2px)"></div><div style="left:28px;top:206px;width:8px;height:1px;background:repeating-linear-gradient(90deg,#A5A294 0 1px,transparent 1px 2px)"></div><div style="left:28px;top:224px;width:8px;height:1px;background:repeating-linear-gradient(90deg,#A5A294 0 1px,transparent 1px 2px)"></div><div style="left:28px;top:242px;width:8px;height:1px;background:repeating-linear-gradient(90deg,#A5A294 0 1px,transparent 1px 2px)"></div><div style="left:28px;top:260px;width:8px;height:1px;background:repeating-linear-gradient(90deg,#A5A294 0 1px,transparent 1px 2px)"></div><div style="left:28px;top:278px;width:8px;height:1px;background:repeating-linear-gradient(90deg,#A5A294 0 1px,transparent 1px 2px)"></div><div style="left:28px;top:296px;width:8px;height:1px;background:repeating-linear-gradient(90deg,#A5A294 0 1px,transparent 1px 2px)"></div><div style="left:28px;top:314px;width:8px;height:1px;background:repeating-linear-gradient(90deg,#A5A294 0 1px,transparent 1px 2px)"></div><div style="left:28px;top:332px;width:8px;height:1px;background:repeating-linear-gradient(90deg,#A5A294 0 1px,transparent 1px 2px)"></div><div style="left:28px;top:350px;width:8px;height:1px;background:repeating-linear-gradient(90deg,#A5A294 0 1px,transparent 1px 2px)"></div><div style="left:28px;top:368px;width:8px;height:1px;background:repeating-linear-gradient(90deg,#A5A294 0 1px,transparent 1px 2px)"></div><div style="left:28px;top:386px;width:8px;height:1px;background:repeating-linear-gradient(90deg,#A5A294 0 1px,transparent 1px 2px)"></div><div style="left:28px;top:404px;width:8px;height:1px;background:repeating-linear-gradient(90deg,#A5A294 0 1px,transparent 1px 2px)"></div><div style="left:28px;top:422px;width:8px;height:1px;background:repeating-linear-gradient(90deg,#A5A294 0 1px,transparent 1px 2px)"></div><div style="left:28px;top:440px;width:8px;height:1px;background:repeating-linear-gradient(90deg,#A5A294 0 1px,transparent 1px 2px)"></div><div style="left:28px;top:458px;width:8px;height:1px;background:repeating-linear-gradient(90deg,#A5A294 0 1px,transparent 1px 2px)"></div><svg style="position:absolute;left:5px;top:4px" width="9" height="9" viewBox="0 0 9 9"><rect x="0.5" y="0.5" width="8" height="8" rx="1" fill="url(#pmg)" stroke="#7B9EBD"/><path d="M2 4.5h5" stroke="#000"/></svg></div>
<div style="left:1051px;top:118px;width:15px;height:461px;background:linear-gradient(90deg,#F3F1EC,#FEFEFB)"></div><div style="left:1051px;top:118px;width:15px;height:15px;border:1px solid #fff;border-radius:3px;background:linear-gradient(135deg,#D4E0FD,#B6CAF9);box-shadow:0 1px 0 #9DB6E8,1px 0 0 #C0D2F4"><svg style="position:absolute;left:2px;top:3px" width="9" height="6" viewBox="0 0 9 6"><path d="M1 5L4.5 1.5L8 5" stroke="#4D6185" stroke-width="2" fill="none"/></svg></div><div style="left:1051px;top:563px;width:15px;height:15px;border:1px solid #fff;border-radius:3px;background:linear-gradient(135deg,#D4E0FD,#B6CAF9);box-shadow:0 1px 0 #9DB6E8,1px 0 0 #C0D2F4"><svg style="position:absolute;left:2px;top:4px" width="9" height="6" viewBox="0 0 9 6"><path d="M1 1L4.5 4.5L8 1" stroke="#4D6185" stroke-width="2" fill="none"/></svg></div><div style="left:1051px;top:136px;width:15px;height:141px;border:1px solid #fff;border-radius:3px;background:linear-gradient(135deg,#D4E0FD,#B6CAF9);box-shadow:0 1px 0 #9DB6E8,1px 0 0 #C0D2F4"><svg style="position:absolute;left:3px;top:65px" width="7" height="8" viewBox="0 0 7 8"><path d="M0 1.5h7M0 3.5h7M0 5.5h7M0 7.5h7" stroke="#EEF4FE"/><path d="M0 2.5h7M0 4.5h7M0 6.5h7" stroke="#A8BEF2"/></svg></div>
<div style="left:208px;top:582px;width:864px;height:30px;background:#ECE9D8;border-left:1px solid #ACA899;border-right:1px solid #ACA899;border-bottom:1px solid #ACA899"></div>
<svg style="position:absolute;left:220px;top:587px" width="13" height="17" viewBox="0 0 13 17"><path d="M0.5 0.5h9l3 3v13h-12z" fill="#F4F8FE" stroke="#3B5FA8"/><path d="M2 5.5h8M2 7.5h8M2 9.5h8M2 11.5h8" stroke="#3A70E0"/></svg>
<div class="t" style="left:241px;top:589px;letter-spacing:-0.580px;">Summary</div>
<div style="left:314px;top:585px;width:101px;height:22px;background:#fff;border:1px solid #316AC5"></div>
<svg style="position:absolute;left:322px;top:588px" width="14" height="15" viewBox="0 0 14 15"><text x="0" y="12" font-family="Liberation Serif" font-style="italic" font-weight="bold" font-size="14">f</text><text x="6" y="14" font-family="Liberation Sans" font-weight="bold" font-size="8">x</text></svg>
<div class="t" style="left:342px;top:589px;letter-spacing:-0.302px;">Functions</div>
<svg style="position:absolute;left:421px;top:587px" width="17" height="17" viewBox="0 0 17 17"><path d="M6 2h-3v13h3" stroke="#E05020" fill="none" stroke-width="1.5"/><rect x="6.5" y="1.5" width="9" height="4" fill="#D8E4F8" stroke="#6080B0"/><rect x="4.5" y="6.5" width="11" height="4" fill="#D8E4F8" stroke="#6080B0"/><rect x="6.5" y="11.5" width="9" height="4" fill="#D8E4F8" stroke="#6080B0"/></svg>
<div class="t" style="left:442px;top:589px;letter-spacing:-0.075px;">Caller/Callee</div>
<div style="left:528px;top:586px;width:1px;height:20px;background:#C5C2B2"></div>
<svg style="position:absolute;left:536px;top:587px" width="17" height="17" viewBox="0 0 17 17"><rect x="5.5" y="1.5" width="8" height="7" fill="#fff" stroke="#6080B0"/><rect x="8.5" y="6.5" width="8" height="7" fill="#fff" stroke="#6080B0"/><rect x="1.5" y="5.5" width="8" height="7" fill="#DCE8FA" stroke="#6080B0"/><path d="M1 12l3 4 3-4z" fill="#2050C0"/></svg>
<div class="t" style="left:557px;top:589px;letter-spacing:-0.113px;">Call Tree</div>
<div style="left:625px;top:586px;width:1px;height:20px;background:#C5C2B2"></div>
<svg style="position:absolute;left:633px;top:587px" width="16" height="17" viewBox="0 0 16 17"><rect x="0.5" y="2.5" width="8" height="10" fill="#fff" stroke="#6080B0"/><rect x="3.5" y="4.5" width="8" height="10" fill="#fff" stroke="#6080B0"/><path d="M6.5 6.5h6l2 2v8h-8z" fill="#fff" stroke="#6080B0"/></svg>
<div class="t" style="left:654px;top:589px;letter-spacing:-0.072px;">Allocation</div>
<div style="left:726px;top:586px;width:1px;height:20px;background:#C5C2B2"></div>
<svg style="position:absolute;left:735px;top:587px" width="13" height="17" viewBox="0 0 13 17"><path d="M3.5 2.5h8v13h-8z" fill="#fff" stroke="#6080B0"/><path d="M4 4l-3 2 3 2-3 2 3 2-3 2" stroke="#E04010" fill="none" stroke-width="1.4"/></svg>
<div class="t" style="left:756px;top:589px;letter-spacing:-0.244px;">Objects Lifetime</div>
<div style="left:860px;top:586px;width:1px;height:20px;background:#C5C2B2"></div>
<svg style="position:absolute;left:1050px;top:589px" width="8" height="8" viewBox="0 0 8 8"><path d="M0.5 0.5h7" stroke="#555"/><path d="M0 2.5h8L4 7z" fill="#555"/></svg>
<div style="left:1076px;top:75px;width:204px;height:678px;background:#ECE9D8;border-left:1px solid #ACA899;border-right:1px solid #ACA899;border-bottom:1px solid #ACA899"></div>
<div style="left:1077px;top:75px;width:202px;height:1px;background:#B8B5A5"></div>
<div style="left:1077px;top:76px;width:202px;height:17px;background:#CCC7BA"></div>
<div class="t" style="left:1081px;top:78px;letter-spacing:-0.202px;">Performance Explorer</div>
<svg style="position:absolute;left:1232px;top:84px" width="9" height="5" viewBox="0 0 9 5"><path d="M0 0h8L4 4z" fill="#000"/></svg><svg style="position:absolute;left:1248px;top:79px" width="8" height="11" viewBox="0 0 8 11"><path d="M1.5 0.5h4v6h-4z" fill="none" stroke="#000"/><path d="M4.5 1v5" stroke="#000"/><path d="M0 7.5h7" stroke="#000"/><path d="M3.5 8v3" stroke="#000"/></svg><svg style="position:absolute;left:1264px;top:80px" width="10" height="9" viewBox="0 0 10 9"><path d="M1 0.8L9 8.2M9 0.8L1 8.2" stroke="#000" stroke-width="1.7"/></svg>
<div class="tb" style="left:1077px;top:93px;width:202px;height:26px;"></div>
<div style="left:1077px;top:119px;width:202px;height:1px;background:#A9A693"></div>
<svg style="position:absolute;left:1084px;top:97px" width="17" height="17" viewBox="0 0 17 17"><rect x="0.5" y="0.5" width="5" height="14" fill="#F4F7FC" stroke="#7E92BA"/><rect x="3.5" y="6.5" width="12" height="10" fill="#EEF2FA" stroke="#4E5E7A"/><path d="M7.5 7v10M11.5 7v10M4 9.5h12M4 12.5h12" stroke="#C8D2E4"/><path d="M4 15L7 12L9 13L12 8L15 15" stroke="#F04848" fill="none" stroke-width="1.2"/><path d="M6 0.5l0.8 2.2 2.2 0.8-2.2 0.8L6 6.5l-0.8-2.2-2.2-0.8 2.2-0.8zM9.5 5l0.8 2.2 2.2 0.8-2.2 0.8L9.5 11l-0.8-2.2-2.2-0.8 2.2-0.8zM13.5 1.5l0.8 2.2 2.2 0.8-2.2 0.8-0.8 2.2-0.8-2.2-2.2-0.8 2.2-0.8z" fill="#fff" stroke="#101820" stroke-width="0.9"/></svg>
<svg style="position:absolute;left:1106px;top:97px" width="18" height="17" viewBox="0 0 18 17"><path d="M3.5 1.5h8l3 3v11h-11z" fill="#F4F7FC" stroke="#5E6E8A"/><rect x="4.5" y="6.5" width="12" height="10" fill="#EEF2FA" stroke="#4E5E7A"/><path d="M8.5 7v10M12.5 7v10M5 9.5h12M5 12.5h12" stroke="#C8D2E4"/><path d="M5 15L8 12L10 13L13 8L16 15" stroke="#F04848" fill="none" stroke-width="1.2"/><path d="M4 0v8M0 4h8M1 1l6 6M7 1L1 7" stroke="#F2C21E" stroke-width="1.2"/><circle cx="4" cy="4" r="1.5" fill="#FFF6C0"/></svg>
<svg style="position:absolute;left:1129px;top:97px" width="18" height="17" viewBox="0 0 18 17"><rect x="5.5" y="3.5" width="12" height="12" fill="#EEF2FA" stroke="#4E5E7A"/><path d="M9.5 4v12M13.5 4v12M6 6.5h12M6 9.5h12" stroke="#C8D2E4"/><path d="M6 14L9 11L11 12L14 5L17 14" stroke="#F04848" fill="none" stroke-width="1.2"/><rect x="6" y="4" width="11" height="2" fill="#4A7AE0"/><path d="M0.5 2.5v12l6.5-6z" fill="#2A9A2A" stroke="#166016" stroke-width="0.8"/></svg>
<div style="left:1151px;top:97px;width:98px;height:18px;background:#fff;border:1px solid #fff"></div>
<div class="t" style="left:1153px;top:100px;letter-spacing:-0.359px;">Sampling</div>
<div style="left:1237px;top:98px;width:11px;height:16px;background:linear-gradient(180deg,#F4F3EC,#DAD8CA)"><svg style="position:absolute;left:1px;top:6px" width="8" height="5" viewBox="0 0 8 5"><path d="M1 0.5h7L4.5 4z" fill="#000"/></svg></div>
<div style="left:1268px;top:93px;width:12px;height:26px;border-radius:4px 0 0 4px;background:linear-gradient(180deg,#EEEDE6,#D6D5C6 60%,#B0AF96)"><svg style="position:absolute;left:3px;top:5px" width="7" height="20" viewBox="0 0 7 20"><path d="M0 0l2.5 2.5L0 5zM4 0l2.5 2.5L4 5z" fill="#000"/><path d="M0 14.5h6" stroke="#000"/><path d="M0 16h6L3 19z" fill="#000"/></svg></div>
<div style="left:1077px;top:120px;width:202px;height:616px;background:#fff"></div>
<svg style="position:absolute;left:1084px;top:123px" width="9" height="9" viewBox="0 0 9 9"><rect x="0.5" y="0.5" width="8" height="8" rx="1" fill="url(#pmg)" stroke="#7B9EBD"/><path d="M2 4.5h5" stroke="#000"/></svg>
<svg style="position:absolute;left:1106px;top:120px" width="17" height="17" viewBox="0 0 17 17"><path d="M1.5 1.5h10l3 3v11h-13z" fill="#fff" stroke="#6A7FA8"/><path d="M3 7.5h10M3 10.5h10M3 13.5h10M6.5 5v10M10.5 5v10" stroke="#B8C4DC"/><path d="M2 14L5 9L8 12L12 6L15 11" stroke="#E03030" fill="none" stroke-width="1.3"/></svg>
<div class="t" style="left:1126px;top:122px;font-weight:bold;letter-spacing:0.7px">Performance*</div>
<div style="left:1109px;top:136px;width:1px;height:40px;background:repeating-linear-gradient(180deg,#A5A294 0 1px,transparent 1px 2px)"></div>
<div style="left:1113px;top:144px;width:8px;height:1px;background:repeating-linear-gradient(90deg,#A5A294 0 1px,transparent 1px 2px)"></div>
<div style="left:1113px;top:176px;width:8px;height:1px;background:repeating-linear-gradient(90deg,#A5A294 0 1px,transparent 1px 2px)"></div>
<svg style="position:absolute;left:1103px;top:139px" width="9" height="9" viewBox="0 0 9 9"><rect x="0.5" y="0.5" width="8" height="8" rx="1" fill="url(#pmg)" stroke="#7B9EBD"/><path d="M2 4.5h5" stroke="#000"/></svg>
<svg style="position:absolute;left:1103px;top:171px" width="9" height="9" viewBox="0 0 9 9"><rect x="0.5" y="0.5" width="8" height="8" rx="1" fill="url(#pmg)" stroke="#7B9EBD"/><path d="M2 4.5h5" stroke="#000"/></svg>
<svg style="position:absolute;left:1125px;top:137px" width="16" height="15" viewBox="0 0 16 15"><path d="M0.5 3.5h5l1 1.5h6v8h-12z" fill="#F3D67A" stroke="#B08A2A"/><path d="M2.5 7.5h13l-3 6h-12z" fill="#F8D870" stroke="#B08A2A"/></svg>
<div class="t" style="left:1146px;top:138px;letter-spacing:0.129px;">Targets</div>
<svg style="position:absolute;left:1125px;top:169px" width="16" height="15" viewBox="0 0 16 15"><path d="M0.5 3.5h5l1 1.5h6v8h-12z" fill="#F3D67A" stroke="#B08A2A"/><path d="M2.5 7.5h13l-3 6h-12z" fill="#F8D870" stroke="#B08A2A"/></svg>
<div class="t" style="left:1146px;top:170px;letter-spacing:-0.076px;">Reports</div>
<div style="left:1126px;top:152px;width:1px;height:8px;background:repeating-linear-gradient(180deg,#A5A294 0 1px,transparent 1px 2px)"></div>
<div style="left:1126px;top:160px;width:11px;height:1px;background:repeating-linear-gradient(90deg,#A5A294 0 1px,transparent 1px 2px)"></div>
<div style="left:1126px;top:184px;width:1px;height:40px;background:repeating-linear-gradient(180deg,#A5A294 0 1px,transparent 1px 2px)"></div>
<div style="left:1126px;top:192px;width:11px;height:1px;background:repeating-linear-gradient(90deg,#A5A294 0 1px,transparent 1px 2px)"></div>
<div style="left:1126px;top:208px;width:11px;height:1px;background:repeating-linear-gradient(90deg,#A5A294 0 1px,transparent 1px 2px)"></div>
<div style="left:1126px;top:224px;width:11px;height:1px;background:repeating-linear-gradient(90deg,#A5A294 0 1px,transparent 1px 2px)"></div>
<svg style="position:absolute;left:1144px;top:152px" width="17" height="17" viewBox="0 0 17 17"><path d="M2.5 0.5h8l4 4v11h-12z" fill="#E8EEF8" stroke="#6A7FA8"/><path d="M1 2v12l7-6z" fill="#28A028"/><circle cx="12" cy="12" r="3.5" fill="#4A6ADA" stroke="#2040A0"/><circle cx="12" cy="12" r="1.3" fill="#fff"/></svg>
<div class="t" style="left:1164px;top:154px;letter-spacing:0.234px;">IRT.dll</div>
<svg style="position:absolute;left:1144px;top:184px" width="17" height="17" viewBox="0 0 17 17"><rect x="1.5" y="1.5" width="11" height="13" rx="1" fill="#3EAA3E" stroke="#207020"/><path d="M2 3h-1M2 6h-1M2 9h-1M2 12h-1" stroke="#E0C030" stroke-width="1.5"/><rect x="4" y="4" width="6" height="4" fill="#D8F0D8"/><path d="M8.5 8.5h5l2 2v6h-7z" fill="#fff" stroke="#3050A0"/><path d="M10 12.5h4M10 14.5h4" stroke="#3050A0"/></svg><div class="t" style="left:1164px;top:186px;letter-spacing:-0.125px;">python080219_1430.vsp</div>
<svg style="position:absolute;left:1144px;top:200px" width="17" height="17" viewBox="0 0 17 17"><rect x="1.5" y="1.5" width="11" height="13" rx="1" fill="#3EAA3E" stroke="#207020"/><path d="M2 3h-1M2 6h-1M2 9h-1M2 12h-1" stroke="#E0C030" stroke-width="1.5"/><rect x="4" y="4" width="6" height="4" fill="#D8F0D8"/><path d="M8.5 8.5h5l2 2v6h-7z" fill="#fff" stroke="#3050A0"/><path d="M10 12.5h4M10 14.5h4" stroke="#3050A0"/></svg><div class="t" style="left:1164px;top:202px;letter-spacing:-0.125px;">python080219_1500.vsp</div>
<svg style="position:absolute;left:1144px;top:216px" width="17" height="17" viewBox="0 0 17 17"><rect x="1.5" y="1.5" width="11" height="13" rx="1" fill="#3EAA3E" stroke="#207020"/><path d="M2 3h-1M2 6h-1M2 9h-1M2 12h-1" stroke="#E0C030" stroke-width="1.5"/><rect x="4" y="4" width="6" height="4" fill="#D8F0D8"/><path d="M8.5 8.5h5l2 2v6h-7z" fill="#fff" stroke="#3050A0"/><path d="M10 12.5h4M10 14.5h4" stroke="#3050A0"/></svg><div class="t" style="left:1164px;top:218px;letter-spacing:-0.111px;">python080219_1515_inst.vsp</div>
<div style="left:1277px;top:120px;width:2px;height:616px;background:#fff"></div>
<div style="left:1279px;top:75px;width:1px;height:678px;background:#ACA899"></div>
<div style="left:1077px;top:736px;width:201px;height:15px;background:linear-gradient(180deg,#F3F1EC,#FEFEFB)"></div><div style="left:1077px;top:736px;width:15px;height:14px;border:1px solid #fff;border-radius:3px;background:linear-gradient(135deg,#D4E0FD,#B6CAF9);box-shadow:0 1px 0 #9DB6E8,1px 0 0 #C0D2F4"><svg style="position:absolute;left:3px;top:2px" width="6" height="9" viewBox="0 0 6 9"><path d="M5 1L1.5 4.5L5 8" stroke="#4D6185" stroke-width="2" fill="none"/></svg></div><div style="left:1263px;top:736px;width:15px;height:14px;border:1px solid #fff;border-radius:3px;background:linear-gradient(135deg,#D4E0FD,#B6CAF9);box-shadow:0 1px 0 #9DB6E8,1px 0 0 #C0D2F4"><svg style="position:absolute;left:4px;top:2px" width="6" height="9" viewBox="0 0 6 9"><path d="M1 1L4.5 4.5L1 8" stroke="#4D6185" stroke-width="2" fill="none"/></svg></div><div style="left:1094px;top:736px;width:143px;height:14px;border:1px solid #fff;border-radius:3px;background:linear-gradient(135deg,#D4E0FD,#B6CAF9);box-shadow:0 1px 0 #9DB6E8,1px 0 0 #C0D2F4"><svg style="position:absolute;left:66px;top:3px" width="8" height="7" viewBox="0 0 8 7"><path d="M1.5 0v7M3.5 0v7M5.5 0v7M7.5 0v7" stroke="#EEF4FE"/><path d="M2.5 0v7M4.5 0v7M6.5 0v7" stroke="#A8BEF2"/></svg></div>
<div style="left:1077px;top:751px;width:202px;height:1px;background:#ECE9D8"></div>
<div style="left:0px;top:616px;width:1072px;height:137px;background:#ECE9D8;border-top:1px solid #ACA899;border-right:1px solid #ACA899;border-left:1px solid #ACA899"></div>
<div style="left:1px;top:617px;width:1070px;height:17px;background:#CCC7BA"></div>
<div class="t" style="left:5px;top:619px;letter-spacing:-0.010px;">Output</div>
<svg style="position:absolute;left:1024px;top:625px" width="9" height="5" viewBox="0 0 9 5"><path d="M0 0h8L4 4z" fill="#000"/></svg><svg style="position:absolute;left:1040px;top:620px" width="8" height="11" viewBox="0 0 8 11"><path d="M1.5 0.5h4v6h-4z" fill="none" stroke="#000"/><path d="M4.5 1v5" stroke="#000"/><path d="M0 7.5h7" stroke="#000"/><path d="M3.5 8v3" stroke="#000"/></svg><svg style="position:absolute;left:1056px;top:621px" width="10" height="9" viewBox="0 0 10 9"><path d="M1 0.8L9 8.2M9 0.8L1 8.2" stroke="#000" stroke-width="1.7"/></svg>
<div class="tb" style="left:1px;top:634px;width:1070px;height:26px;"></div>
<div style="left:1px;top:660px;width:1070px;height:1px;background:#A9A693"></div>
<div class="t" style="left:6px;top:641px;letter-spacing:-0.020px;">Show output from:</div>
<div style="left:104px;top:638px;width:199px;height:19px;background:#fff;border:1px solid #fff"></div>
<div class="t" style="left:106px;top:641px;letter-spacing:-0.273px;">Performance</div>
<div style="left:289px;top:639px;width:14px;height:17px;background:linear-gradient(180deg,#F4F3EC,#DAD8CA);border:1px solid #E2E0D4"><svg style="position:absolute;left:3px;top:7px" width="8" height="5" viewBox="0 0 8 5"><path d="M0.5 0.5h7L4 4z" fill="#000"/></svg></div>
<div style="left:307px;top:638px;width:1px;height:19px;background:#C5C2B2"></div>
<svg style="position:absolute;left:314px;top:639px" width="15" height="17" viewBox="0 0 15 17"><path d="M2.5 1.5h7l3 3v8h-10z" fill="#F0F0F8" stroke="#A8B0C8"/><path d="M7.5 7v9M4 11l3.5-4 3.5 4" stroke="#B8C0D8" fill="none" stroke-width="1.5"/></svg>
<div style="left:336px;top:638px;width:1px;height:19px;background:#C5C2B2"></div>
<svg style="position:absolute;left:343px;top:639px" width="17" height="17" viewBox="0 0 17 17"><path d="M5.5 1.5h7l3 3v9h-10z" fill="#fff" stroke="#4060A0"/><path d="M7 6.5h5M7 8.5h5" stroke="#30A030"/><path d="M1 11l4-4v2h6v4h-6v2z" fill="#40A040" stroke="#206020"/></svg>
<svg style="position:absolute;left:365px;top:639px" width="17" height="17" viewBox="0 0 17 17"><path d="M1.5 1.5h7l3 3v9h-10z" fill="#fff" stroke="#4060A0"/><path d="M3 6.5h5M3 8.5h5" stroke="#30A030"/><path d="M16 11l-4-4v2h-6v4h6v2z" fill="#40A040" stroke="#206020"/></svg>
<div style="left:388px;top:638px;width:1px;height:19px;background:#C5C2B2"></div>
<svg style="position:absolute;left:394px;top:639px" width="18" height="17" viewBox="0 0 18 17"><path d="M1 3.5h11M1 6.5h11M1 9.5h9M1 12.5h7" stroke="#7080A0"/><path d="M9 8l7 7M16 8l-7 7" stroke="#E02020" stroke-width="2"/></svg>
<div style="left:418px;top:638px;width:1px;height:19px;background:#C5C2B2"></div>
<svg style="position:absolute;left:424px;top:639px" width="17" height="17" viewBox="0 0 17 17"><rect x="1.5" y="2.5" width="14" height="12" fill="#fff" stroke="#2040A0"/><rect x="1" y="2" width="15" height="2" fill="#2050C0"/><path d="M12 7v3H6M8 8l-2 2 2 2" stroke="#000" fill="none"/></svg>
<div style="left:1px;top:661px;width:1054px;height:75px;background:#fff"></div>
<div style="left:13px;top:662px;height:15px;line-height:15px;white-space:nowrap;font:11.667px 'Liberation Mono',monospace">Symbol Engine: Loaded symbols from VSP for module &#39;d:\travail\irt\trunk\IRT.dll&#39;</div>
<div style="left:13px;top:677px;height:15px;line-height:15px;white-space:nowrap;font:11.667px 'Liberation Mono',monospace">Symbol Engine: Loaded symbols from VSP for module &#39;C:\WINDOWS\WinSxS\x86_Microsoft.VC80.CRT_1fc8b3b9a1e18e3b_8.0.50727.762_x-ww_6b128700\MSVCR80.dll&#39;</div>
<div style="left:13px;top:692px;height:15px;line-height:15px;white-space:nowrap;font:11.667px 'Liberation Mono',monospace">Completed Analysis for D:\Travail\irt\trunk\python080219_1515_inst.vsp</div>
<div style="left:1055px;top:661px;width:15px;height:75px;background:linear-gradient(90deg,#F3F1EC,#FEFEFB)"></div><div style="left:1055px;top:661px;width:15px;height:15px;border:1px solid #fff;border-radius:3px;background:linear-gradient(135deg,#D4E0FD,#B6CAF9);box-shadow:0 1px 0 #9DB6E8,1px 0 0 #C0D2F4"><svg style="position:absolute;left:2px;top:3px" width="9" height="6" viewBox="0 0 9 6"><path d="M1 5L4.5 1.5L8 5" stroke="#4D6185" stroke-width="2" fill="none"/></svg></div><div style="left:1055px;top:720px;width:15px;height:15px;border:1px solid #fff;border-radius:3px;background:linear-gradient(135deg,#D4E0FD,#B6CAF9);box-shadow:0 1px 0 #9DB6E8,1px 0 0 #C0D2F4"><svg style="position:absolute;left:2px;top:4px" width="9" height="6" viewBox="0 0 9 6"><path d="M1 1L4.5 4.5L8 1" stroke="#4D6185" stroke-width="2" fill="none"/></svg></div><div style="left:1055px;top:711px;width:15px;height:7px;border:1px solid #fff;border-radius:3px;background:linear-gradient(135deg,#D4E0FD,#B6CAF9);box-shadow:0 1px 0 #9DB6E8,1px 0 0 #C0D2F4"></div>
<div style="left:1px;top:736px;width:1053px;height:15px;background:linear-gradient(180deg,#F3F1EC,#FEFEFB)"></div><div style="left:1px;top:736px;width:15px;height:14px;border:1px solid #fff;border-radius:3px;background:linear-gradient(135deg,#D4E0FD,#B6CAF9);box-shadow:0 1px 0 #9DB6E8,1px 0 0 #C0D2F4"><svg style="position:absolute;left:3px;top:2px" width="6" height="9" viewBox="0 0 6 9"><path d="M5 1L1.5 4.5L5 8" stroke="#4D6185" stroke-width="2" fill="none"/></svg></div><div style="left:1039px;top:736px;width:15px;height:14px;border:1px solid #fff;border-radius:3px;background:linear-gradient(135deg,#D4E0FD,#B6CAF9);box-shadow:0 1px 0 #9DB6E8,1px 0 0 #C0D2F4"><svg style="position:absolute;left:4px;top:2px" width="6" height="9" viewBox="0 0 6 9"><path d="M1 1L4.5 4.5L1 8" stroke="#4D6185" stroke-width="2" fill="none"/></svg></div><div style="left:19px;top:736px;width:1002px;height:14px;border:1px solid #fff;border-radius:3px;background:linear-gradient(135deg,#D4E0FD,#B6CAF9);box-shadow:0 1px 0 #9DB6E8,1px 0 0 #C0D2F4"><svg style="position:absolute;left:496px;top:3px" width="8" height="7" viewBox="0 0 8 7"><path d="M1.5 0v7M3.5 0v7M5.5 0v7M7.5 0v7" stroke="#EEF4FE"/><path d="M2.5 0v7M4.5 0v7M6.5 0v7" stroke="#A8BEF2"/></svg></div>
<div style="left:1055px;top:736px;width:16px;height:16px;background:#ECE9D8"></div>
<div style="left:0px;top:752px;width:1280px;height:1px;background:#ACA899"></div>
<div style="left:1072px;top:752px;width:4px;height:1px;background:#F4F2EA"></div>
<div style="left:0px;top:753px;width:1280px;height:24px;background:linear-gradient(90deg,#ECEBDF,#F4F2EA)"></div>
<div style="left:0px;top:753px;width:1280px;height:2px;background:#FDFDFB"></div>
<div style="left:0px;top:755px;width:1280px;height:1px;background:#ACA899"></div>
<div style="left:0px;top:777px;width:1280px;height:1px;background:#8E8C7C"></div>
<svg style="position:absolute;left:3px;top:757px" width="17" height="17" viewBox="0 0 17 17"><rect x="1.5" y="1.5" width="14" height="12" fill="#fff" stroke="#3060B0"/><rect x="1" y="1" width="15" height="3" fill="#3C78D8"/><path d="M7 5l1 2 2 1-2 1-1 2-1-2-2-1 2-1z" fill="#F0C030"/><rect x="9.5" y="9.5" width="7" height="7" fill="#5050A0" stroke="#000"/></svg>
<div class="t" style="left:21px;top:759px;letter-spacing:-0.247px;color:#707070">Code Definition Window</div>
<div style="left:138px;top:757px;width:1px;height:17px;background:#A5A491"></div>
<svg style="position:absolute;left:141px;top:757px" width="17" height="17" viewBox="0 0 17 17"><path d="M2 1v6h3M2 10v6M0 14l2 2 2-2M3 5l2 2-2 2" stroke="#2050B0" fill="none" stroke-width="1.3"/><rect x="7.5" y="4.5" width="9" height="8" fill="#E0EAFA" stroke="#2050B0"/><path d="M9 7.5h6M9 10.5h6" stroke="#2050B0"/></svg>
<div class="t" style="left:159px;top:759px;letter-spacing:-0.195px;color:#707070">Call Browser</div>
<div style="left:221px;top:753px;width:60px;height:23px;background:#FCFCFE;border:1px solid #ACA899;border-top:none;border-radius:0 0 3px 3px"></div>
<svg style="position:absolute;left:225px;top:757px" width="17" height="17" viewBox="0 0 17 17"><rect x="1.5" y="2.5" width="13" height="12" fill="#F4F8FE" stroke="#3B5FA8"/><path d="M4 6.5h8M4 8.5h8M4 10.5h8M4 12.5h6" stroke="#3A70E0"/></svg>
<div class="t" style="left:242px;top:759px;letter-spacing:-0.010px;">Output</div>
<svg style="position:absolute;left:282px;top:757px" width="17" height="17" viewBox="0 0 17 17"><rect x="0.5" y="1.5" width="14" height="10" fill="#fff" stroke="#3060B0"/><rect x="1" y="2" width="13" height="2" fill="#3C78D8"/><path d="M2 6.5h10M2 8.5h10" stroke="#3060B0"/><path d="M7 11h3v5H7zM11 11h3v5h-3z" fill="#303030"/></svg>
<div class="t" style="left:300px;top:759px;letter-spacing:-0.239px;color:#707070">Find Results 1</div>
<div style="left:370px;top:757px;width:1px;height:17px;background:#A5A491"></div>
<svg style="position:absolute;left:374px;top:757px" width="17" height="17" viewBox="0 0 17 17"><rect x="1.5" y="2.5" width="11" height="13" fill="#fff" stroke="#707070"/><rect x="4" y="0.5" width="6" height="4" fill="#F0D070" stroke="#907030"/><circle cx="12" cy="12" r="4.5" fill="#E03020"/><path d="M10 10l4 4M14 10l-4 4" stroke="#fff" stroke-width="1.5"/></svg>
<div class="t" style="left:391px;top:759px;letter-spacing:-0.163px;color:#707070">Error List</div>
<svg style="position:absolute;left:1080px;top:757px" width="17" height="17" viewBox="0 0 17 17"><rect x="1.5" y="1.5" width="9" height="7" fill="#5A8AE0" stroke="#2050A0"/><rect x="5.5" y="6.5" width="10" height="8" fill="#5A8AE0" stroke="#2050A0"/><rect x="0" y="9" width="8" height="3" fill="#E8E8E8" stroke="#808080" stroke-width="0.5"/><rect x="6" y="14" width="10" height="3" fill="#E8E8E8" stroke="#808080" stroke-width="0.5"/></svg>
<div class="t" style="left:1097px;top:759px;letter-spacing:-0.109px;color:#707070">Server...</div>
<div style="left:1146px;top:753px;width:71px;height:23px;background:#FCFCFE;border:1px solid #ACA899;border-top:none;border-radius:0 0 3px 3px"></div>
<svg style="position:absolute;left:1149px;top:757px" width="17" height="17" viewBox="0 0 17 17"><rect x="0.5" y="1.5" width="15" height="14" fill="#fff" stroke="#2050A0"/><rect x="1" y="2" width="14" height="3" fill="#4A78D8"/><path d="M3 13L6 9L9 11L13 6" stroke="#E03030" fill="none" stroke-width="1.3"/></svg>
<div class="t" style="left:1166px;top:759px;letter-spacing:-0.061px;">Perfor...</div>
<svg style="position:absolute;left:1218px;top:757px" width="17" height="17" viewBox="0 0 17 17"><path d="M2 15L10 7" stroke="#C02020" stroke-width="2.5"/><path d="M9 2l6 6M11 1l5 5" stroke="#606060" stroke-width="2"/><path d="M15 15L6 6" stroke="#505050" stroke-width="2"/><path d="M2 2a3 3 0 0 0 4 4" stroke="#505050" fill="none" stroke-width="2"/></svg>
<div class="t" style="left:1237px;top:759px;letter-spacing:0.009px;color:#707070">Toolbox</div>
<div style="left:0px;top:778px;width:1280px;height:20px;background:linear-gradient(180deg,#DCDACB 0,#EAE7D5 2px,#ECE9D8 90%,#F2F0E4 100%)"></div>
<div class="t" style="left:8px;top:784px;letter-spacing:-0.362px;">Ready</div>
<div style="left:0px;top:798px;width:1280px;height:2px;background:linear-gradient(180deg,#3A8CF0,#1C5AD8)"></div>
</body></html>
